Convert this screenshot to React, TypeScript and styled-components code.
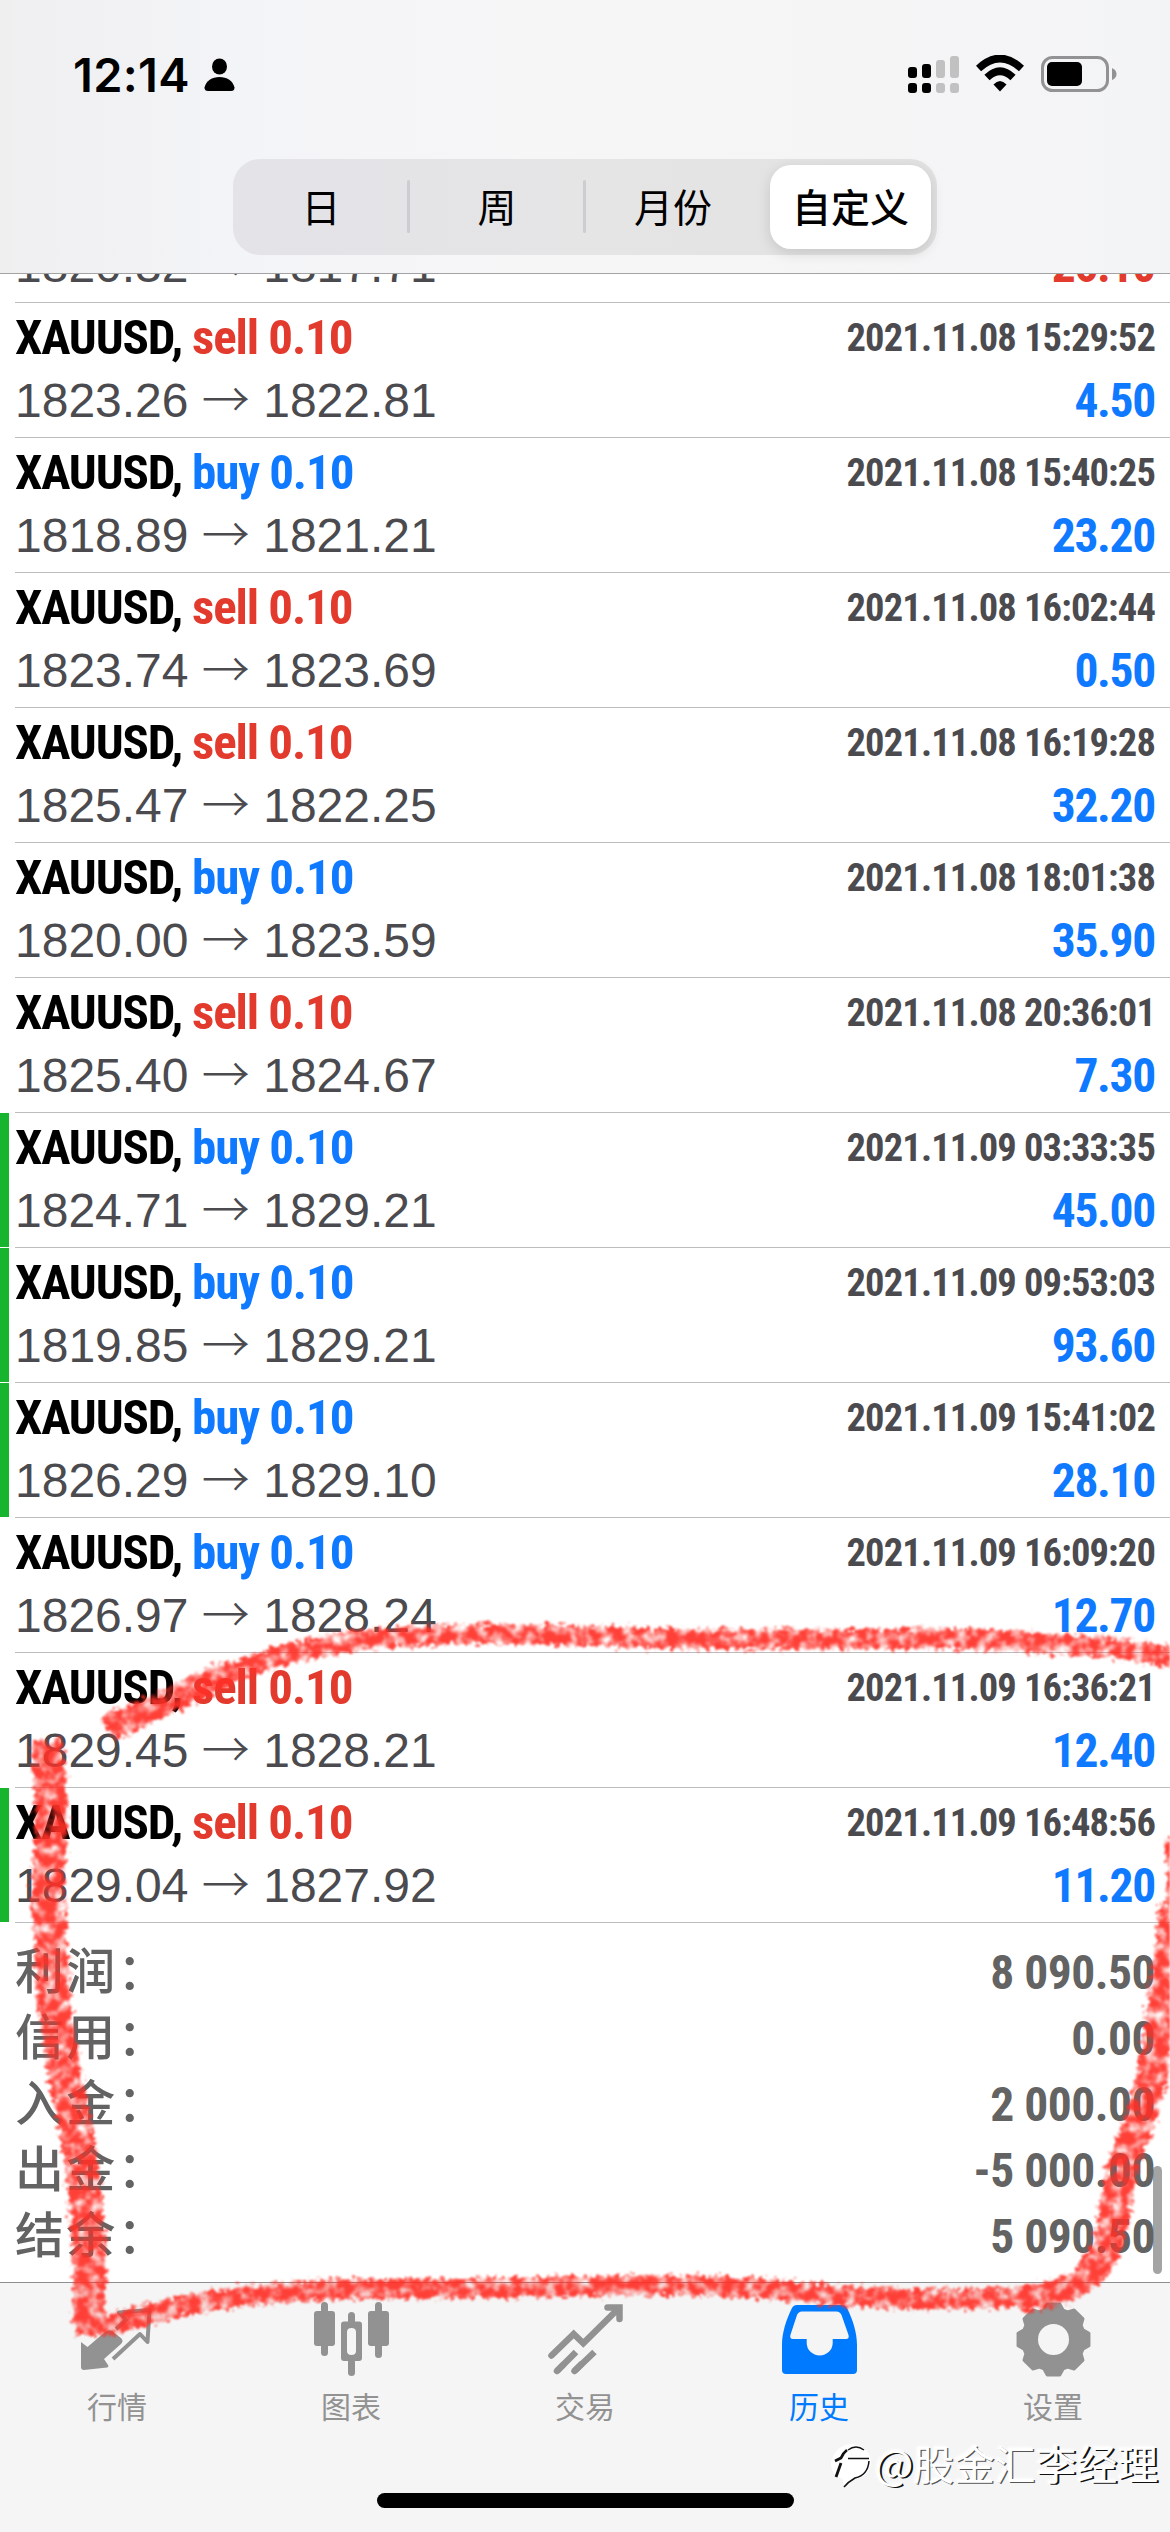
import React from 'react';
import styled, { createGlobalStyle } from 'styled-components';

const RED = '#e23b2e';
const BLUE = '#0f7aff';
const GREY = '#929292';
const cjk = `"Noto Sans CJK SC", sans-serif`;

const GlobalStyle = createGlobalStyle`
  * { box-sizing: border-box; }
  body { margin: 0; background: #fff; }
`;

const Screen = styled.div`
  position: relative;
  display: flex;
  flex-direction: column;
  width: 1170px;
  height: 2532px;
  overflow: hidden;
  background: #fff;
  font-family: Roboto, "Noto Sans CJK SC", sans-serif;
`;

const Header = styled.header`
  flex: none;
  height: 274px;
  border-bottom: 1px solid #a3a3a5;
  background: linear-gradient(90deg, #efeff0 0%, #f3f4f7 20%, #f6f6f7 45%, #f5f5f6 75%, #f3f4f6 100%);
`;

const StatusBar = styled.div`
  display: flex;
  align-items: flex-start;
  justify-content: space-between;
  height: 159px;
  padding: 0 53px 0 73px;
`;

const Clock = styled.div`
  display: flex;
  padding-top: 45px;
  gap: 14px;
  font: 600 47px/60px Inter, sans-serif;
  letter-spacing: 0.3px;
  color: #000;
  svg { margin-top: 13px; }
`;

const StatusIcons = styled.div`
  display: flex;
  align-items: flex-start;
  gap: 17px;
  padding-top: 55px;
`;

const Segments = styled.nav`
  display: flex;
  width: 704px;
  height: 96px;
  margin: 0 auto;
  border-radius: 27px;
  background: linear-gradient(90deg, #e3e3e8, #e5e5e6 50%, #e2e2e2);
`;

const Segment = styled.div<{ $active?: boolean; $divider?: boolean }>`
  position: relative;
  flex: none;
  display: flex;
  align-items: center;
  justify-content: center;
  width: ${p => (p.$active ? 161 : 176)}px;
  margin: ${p => (p.$active ? '6px 6px 6px 9px' : '0')};
  padding-bottom: 4px;
  border-radius: 21px;
  background: ${p => (p.$active ? '#fff' : 'transparent')};
  box-shadow: ${p => (p.$active ? '0 4px 14px rgba(0,0,0,.13)' : 'none')};
  font: ${p => (p.$active ? 500 : 400)} 39px/50px ${cjk};
  color: #000;
  &::after {
    content: ${p => (p.$divider ? '""' : 'none')};
    position: absolute;
    right: -1px;
    top: 21px;
    width: 3px;
    height: 53px;
    border-radius: 2px;
    background: #cdcdd1;
  }
`;

const Content = styled.main`
  position: relative;
  flex: none;
  height: 2008px;
  overflow: hidden;
`;

const Deals = styled.div`
  display: flex;
  flex-direction: column;
  margin-top: -107px;
`;

const Deal = styled.div<{ $marked?: boolean }>`
  display: flex;
  height: 135px;
  background: ${p => (p.$marked ? 'linear-gradient(#16b52d, #16b52d) 0 1px / 9px 134px no-repeat' : 'none')};
  padding-left: 15px;
`;

const DealBody = styled.div`
  flex: 1;
  border-top: 1px solid #bdbdc0;
  padding: 5px 15px 0 0;
`;

const Line = styled.div<{ $h: number }>`
  display: flex;
  align-items: center;
  justify-content: space-between;
  height: ${p => p.$h}px;
  line-height: ${p => p.$h}px;
  white-space: pre;
`;

const Condensed = styled.span`
  font-family: Roboto, sans-serif;
  font-stretch: 75%;
  font-weight: 700;
`;

const Title = styled(Condensed)`
  font-size: 49px;
  letter-spacing: -1.2px;
  color: #000;
`;

const Side = styled.span<{ $side: 'buy' | 'sell' }>`
  letter-spacing: -1.1px;
  color: ${p => (p.$side === 'sell' ? RED : BLUE)};
`;

const Stamp = styled(Condensed)`
  font-size: 38.5px;
  letter-spacing: -0.85px;
  color: #4b4b4f;
`;

const Prices = styled.span`
  position: relative;
  top: 1px;
  font-family: "Liberation Sans", sans-serif;
  font-size: 48px;
  color: #4b4b4f;
`;

const Arrow = styled.span`
  font: 300 48px/1 "Noto Sans CJK SC", sans-serif;
`;

const Profit = styled(Condensed)<{ $loss?: boolean }>`
  position: relative;
  top: 1px;
  font-size: 47.5px;
  letter-spacing: -1.3px;
  color: ${p => (p.$loss ? RED : BLUE)};
`;

const Summary = styled.dl`
  margin: 0 0 0 15px;
  padding: 17px 15px 0 0;
  border-top: 1px solid #bdbdc0;
`;

const SummaryRow = styled(Line)`
  color: #636363;
`;

const Label = styled.dt`
  margin-top: -11px;
  font: 500 49px/66px ${cjk};
  letter-spacing: 2.3px;
`;

const Amount = styled.dd`
  margin: 0;
  font: 700 47.5px/66px Roboto, sans-serif;
  font-stretch: 84%;
  letter-spacing: -0.5px;
`;

const ScrollThumb = styled.div`
  position: absolute;
  right: 8px;
  bottom: 8px;
  width: 9px;
  height: 108px;
  border-radius: 5px;
  background: rgba(90, 90, 90, .55);
`;

const TabBar = styled.nav`
  flex: none;
  display: flex;
  height: 250px;
  border-top: 1px solid #8f8f92;
  background: #f5f5f5;
`;

const Tab = styled.div<{ $active?: boolean }>`
  flex: 1;
  display: flex;
  flex-direction: column;
  align-items: center;
  gap: 6px;
  padding-top: 19px;
  font: 400 30px/44px ${cjk};
  color: ${p => (p.$active ? '#007aff' : GREY)};
`;

const HomeIndicator = styled.div`
  position: absolute;
  left: 377px;
  bottom: 24px;
  width: 417px;
  height: 15px;
  border-radius: 8px;
  background: #000;
`;

const Credit = styled.div`
  position: absolute;
  right: 12px;
  bottom: 43px;
  display: flex;
  align-items: center;
  gap: 3px;
  font: 400 40.8px/52px ${cjk};
  color: #fff;
  text-shadow: 1.3px 1.3px 0 #555, -1px -1px 3px #fff;
`;

const CreditLine = styled.span`
  margin-top: -5px;
`;

const CreditAt = styled.span`
  text-shadow: 2px 1px 0 #111, -1px -1px 3px #fff;
`;

const CreditName = styled.span`
  text-shadow: 2px 1.3px 0 #111, -1px -1px 3px #fff;
`;

const Scribble = styled.svg`
  position: absolute;
  left: 0;
  top: 0;
  pointer-events: none;
`;

type Row = { side: 'buy' | 'sell'; time: string; from: string; to: string; profit: string; marked?: boolean };

const rows: Row[] = [
  { side: 'buy', time: '2021.11.08 15:12:40', from: '1820.32', to: '1817.71', profit: '-26.10' },
  { side: 'sell', time: '2021.11.08 15:29:52', from: '1823.26', to: '1822.81', profit: '4.50' },
  { side: 'buy', time: '2021.11.08 15:40:25', from: '1818.89', to: '1821.21', profit: '23.20' },
  { side: 'sell', time: '2021.11.08 16:02:44', from: '1823.74', to: '1823.69', profit: '0.50' },
  { side: 'sell', time: '2021.11.08 16:19:28', from: '1825.47', to: '1822.25', profit: '32.20' },
  { side: 'buy', time: '2021.11.08 18:01:38', from: '1820.00', to: '1823.59', profit: '35.90' },
  { side: 'sell', time: '2021.11.08 20:36:01', from: '1825.40', to: '1824.67', profit: '7.30' },
  { side: 'buy', time: '2021.11.09 03:33:35', from: '1824.71', to: '1829.21', profit: '45.00', marked: true },
  { side: 'buy', time: '2021.11.09 09:53:03', from: '1819.85', to: '1829.21', profit: '93.60', marked: true },
  { side: 'buy', time: '2021.11.09 15:41:02', from: '1826.29', to: '1829.10', profit: '28.10', marked: true },
  { side: 'buy', time: '2021.11.09 16:09:20', from: '1826.97', to: '1828.24', profit: '12.70' },
  { side: 'sell', time: '2021.11.09 16:36:21', from: '1829.45', to: '1828.21', profit: '12.40' },
  { side: 'sell', time: '2021.11.09 16:48:56', from: '1829.04', to: '1827.92', profit: '11.20', marked: true },
];

const totals = [
  ['利润', '8 090.50'],
  ['信用', '0.00'],
  ['入金', '2 000.00'],
  ['出金', '-5 000.00'],
  ['结余', '5 090.50'],
];

const gearPath = () => {
  const pts: string[] = [];
  for (let i = 0; i < 8; i++) {
    for (const [da, r] of [[-18, 31], [-10, 36], [10, 36], [18, 31]]) {
      const a = ((i * 45 + da) * Math.PI) / 180;
      pts.push(`${(37.5 + r * Math.cos(a)).toFixed(2)} ${(37.5 + r * Math.sin(a)).toFixed(2)}`);
    }
  }
  return `M${pts.join('L')}ZM54.500 37.5a17 17 0 1 0-34 0a17 17 0 1 0 34 0Z`;
};

const icons = {
  quotes: (
    <>
      <path fill="currentColor" d="M1 40L7.500 45L25 30Q29 27 32 29L41 36Q44 39 41 42L24 57L28 63Q29 65 27 65.500L4 68Q1 68 1 65Z" />
      <path fill="none" stroke="currentColor" strokeWidth="4" strokeLinejoin="round" d="M33 57L60 32L67.500 40L69.500 8L39 10.500L46 18L36 27" />
    </>
  ),
  chart: (
    <g fill="currentColor">
      <rect x="0" y="9" width="21" height="35" rx="3" /><rect x="7" y="0" width="7" height="54" rx="3.500" />
      <path fillRule="evenodd" d="M30 19.500H45Q48 19.500 48 22.500V56Q48 59 45 59H30Q27 59 27 56V22.500Q27 19.500 30 19.500ZM37.500 26Q33 26 33 30V49Q33 53 37.500 53Q42 53 42 49V30Q42 26 37.500 26Z" />
      <rect x="34" y="10" width="7" height="14" rx="3.500" /><rect x="34" y="56" width="7" height="18" rx="3.500" />
      <rect x="54" y="9" width="21" height="35" rx="3" /><rect x="61" y="0" width="7" height="56" rx="3.500" />
    </g>
  ),
  trade: (
    <g fill="none" stroke="currentColor" strokeWidth="6.500">
      <path strokeLinecap="round" strokeLinejoin="miter" d="M3.500 53.500L25.700 32L35.300 41.300L71 6M59.500 5.500H71.500V17" />
      <path strokeLinecap="round" d="M9 69L15 63M26.500 69L33 62.500" />
      <path d="M9 69L28 50M26.500 69L46.500 50" />
    </g>
  ),
  history: (
    <path fill="currentColor" fillRule="evenodd" d="M0 43C0 31 4 18 10 6Q11.500 3 15 3H60Q63.500 3 65 6C71 18 75 31 75 43V68Q75 72 71 72H4Q0 72 0 68ZM20 9.500Q16.500 9.500 15 13L8.400 33Q7.500 37 11 37H24.700V41A13 12.500 0 0 0 50.700 41V37H64Q67.500 37 66.500 33L59.500 13Q58 9.500 54.500 9.500Z" />
  ),
  settings: <path fill="currentColor" stroke="currentColor" strokeWidth="3" strokeLinejoin="round" fillRule="evenodd" d={gearPath()} />,
};

const tabs: { icon: keyof typeof icons; label: string }[] = [
  { icon: 'quotes', label: '行情' },
  { icon: 'chart', label: '图表' },
  { icon: 'trade', label: '交易' },
  { icon: 'history', label: '历史' },
  { icon: 'settings', label: '设置' },
];

const PersonIcon = () => (
  <svg width="31" height="34" viewBox="0 0 31 34">
    <ellipse cx="15.500" cy="8.500" rx="7.500" ry="8" />
    <path d="M4 33Q0.500 33 0.500 29.500C2 23 8 19 15.500 19S29 23 30.500 29.500Q30.500 33 27 33Z" />
  </svg>
);

const SignalIcon = () => (
  <svg width="51" height="40" viewBox="0 0 51 40">
    {[12, 9, 5, 1].map((y, i) => (
      <g key={y} fill={i < 2 ? '#000' : '#c1c1c2'}>
        <rect x={i * 14} y={y} width="9" height={23 - y} rx="3" />
        <rect x={i * 14} y="28" width="9" height="10" rx="3" />
      </g>
    ))}
  </svg>
);

const WifiIcon = () => (
  <svg width="48" height="38" viewBox="0 0 48 38">
    <path d="M24 36.500L17.500 29.500Q24 22.500 30.500 29.500Z" />
    <path fill="none" stroke="#000" strokeWidth="7.500" d="M2.500 13.500Q24-6.500 45.500 13.500M11 22.500Q24 10 37 22.500" />
  </svg>
);

const BatteryIcon = () => (
  <svg width="76" height="38" viewBox="0 0 76 38">
    <rect x="1.500" y="2.500" width="65" height="33" rx="10" fill="none" stroke="#929294" strokeWidth="3" />
    <rect x="6" y="7" width="35" height="24" rx="5" />
    <path fill="#929294" d="M71 13Q75.500 15 75.500 19T71 25Z" />
  </svg>
);

const CreditLogo = () => (
  <svg width="42" height="48" viewBox="0 0 42 48">
    <path fill="#fff" d="M20 3C33 3 41 12 41 21C41 33 30 38 22 39L14 46L13 38C5 36 0 29 1 21Q5 5 20 3Z" />
    <path fill="none" stroke="#111" strokeWidth="1.500" d="M18 9Q26 3 34 9M18 17.500H39M39 20Q38 34 25 37Q18 41 14 46" />
    <path fill="none" stroke="#111" strokeWidth="2.800" d="M5 20L11 17Q13 12 17 9M11 22L6 36" />
  </svg>
);

const strokes: [number, string][] = [
  [26, 'M107 1729L164 1703L224 1675'],
  [20, 'M190 1691L224 1676Q298 1645 380 1638T585 1636T846 1639T1040 1643'],
  [20, 'M1030 1643Q1100 1645 1145 1652L1180 1660'],
  [33, 'M46 1740Q54 1800 50 1850T50 1930Q54 2030 69 2094T89 2250L90 2322'],
  [20, 'M76 2325H112Q157 2309 224 2299T373 2289T585 2286'],
  [20, 'M585 2286Q720 2283 800 2292T958 2299T1033 2298'],
  [26, 'M1020 2298Q1066 2297 1092 2272'],
  [31, 'M1088 2275Q1111 2252 1116 2200C1122 2150 1148 2120 1156 2050Q1164 2000 1176 1905'],
  [14, 'M1176 1930L1172 1840'],
];

export default function App() {
  return (
    <>
      <GlobalStyle />
      <Screen>
        <Header>
          <StatusBar>
            <Clock>12:14<PersonIcon /></Clock>
            <StatusIcons><SignalIcon /><WifiIcon /><BatteryIcon /></StatusIcons>
          </StatusBar>
          <Segments>
            <Segment $divider>日</Segment>
            <Segment $divider>周</Segment>
            <Segment>月份</Segment>
            <Segment $active>自定义</Segment>
          </Segments>
        </Header>
        <Content>
          <Deals>
            {rows.map(r => (
              <Deal key={r.time} $marked={r.marked}>
                <DealBody>
                  <Line $h={60}>
                    <Title>XAUUSD, <Side $side={r.side}>{r.side} 0.10</Side></Title>
                    <Stamp>{r.time}</Stamp>
                  </Line>
                  <Line $h={64}>
                    <Prices>{r.from} <Arrow>→</Arrow> {r.to}</Prices>
                    <Profit $loss={r.profit.startsWith('-')}>{r.profit}</Profit>
                  </Line>
                </DealBody>
              </Deal>
            ))}
          </Deals>
          <Summary>
            {totals.map(([label, value]) => (
              <SummaryRow key={label} $h={66}>
                <Label>{label}：</Label>
                <Amount>{value}</Amount>
              </SummaryRow>
            ))}
          </Summary>
          <ScrollThumb />
        </Content>
        <TabBar>
          {tabs.map(t => (
            <Tab key={t.icon} $active={t.icon === 'history'}>
              <svg width="75" height="75" viewBox="0 0 75 75">{icons[t.icon]}</svg>
              {t.label}
            </Tab>
          ))}
        </TabBar>
        <HomeIndicator />
        <Scribble width="1170" height="2532" viewBox="0 0 1170 2532">
          <defs>
            <filter id="crayon" filterUnits="userSpaceOnUse" x="0" y="1600" width="1170" height="760" colorInterpolationFilters="sRGB">
              <feTurbulence type="fractalNoise" baseFrequency="0.2" numOctaves="3" seed="4" result="noise" />
              <feTurbulence type="fractalNoise" baseFrequency="0.09" numOctaves="4" seed="9" result="patches" />
              <feDisplacementMap in="SourceGraphic" in2="noise" scale="15" xChannelSelector="R" yChannelSelector="G" result="rough" />
              <feColorMatrix in="patches" type="matrix" values="0 0 0 0 0  0 0 0 0 0  0 0 0 0 0  0 0 2.400 0 -0.400" result="grain" />
              <feComposite in="rough" in2="grain" operator="in" />
              <feGaussianBlur stdDeviation="1" />
            </filter>
          </defs>
          <g filter="url(#crayon)" fill="none" stroke="#ff3027" strokeLinejoin="round" opacity="0.92">
            {strokes.map(([w, d]) => <path key={d} d={d} strokeWidth={w} />)}
          </g>
        </Scribble>
        <Credit>
          <CreditLogo />
          <CreditLine><CreditAt>@</CreditAt>股金汇<CreditName>李经理</CreditName></CreditLine>
        </Credit>
      </Screen>
    </>
  );
}
